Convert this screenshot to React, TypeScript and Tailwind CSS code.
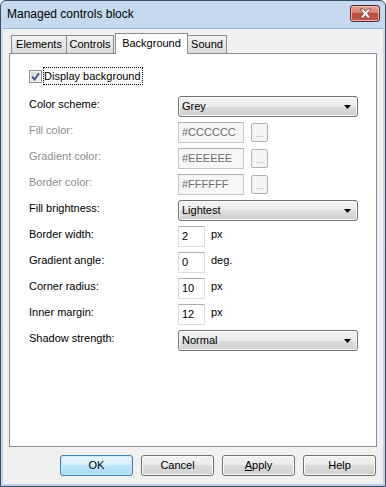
import React from "react";

function Dropdown({ value }: { value: string }) {
  return (
    <div className="w-[180px] h-[21px] border border-[#707070] rounded-[3px] bg-[linear-gradient(to_bottom,#f2f2f2_0%,#ebebeb_50%,#dddddd_50%,#cfcfcf_100%)] flex items-center pl-[3px] pr-[5px] shadow-[inset_0_0_0_1px_#fcfcfc]">
      <span className="flex-1 leading-[13px] text-black">{value}</span>
      <svg width="7" height="4" viewBox="0 0 7 4" className="mr-[1px]">
        <path d="M0 0 H7 L3.5 4 Z" fill="#000" />
      </svg>
    </div>
  );
}

function ColorInput({ value }: { value: string }) {
  return (
    <div className="flex items-start">
      <div className="w-[66px] h-[21px] border border-[#c4c6cb] border-t-[#abadb3] bg-[#f6f6f6] flex items-center pl-[3px] text-[#6d6d6d] leading-[13px]">
        {value}
      </div>
      <div className="ml-[7px] mt-[1px] w-[17px] h-[19px] border border-[#adb2b5] rounded-[2px] bg-[#f4f4f4] flex items-end justify-center pb-[2px] text-[#9a9a9a] text-[9px] leading-[9px]">
        ...
      </div>
    </div>
  );
}

function NumInput({ value, unit }: { value: string; unit: string }) {
  return (
    <div className="flex items-start">
      <div className="w-[27px] h-[21px] border border-[#dadde2] border-t-[#abadb3] bg-white flex items-center pl-[3px] text-black leading-[13px]">
        {value}
      </div>
      <span className="ml-[6px] pt-[2px] leading-[13px] text-black">{unit}</span>
    </div>
  );
}

function Row({
  label,
  disabled,
  children,
}: {
  label: string;
  disabled?: boolean;
  children: React.ReactNode;
}) {
  return (
    <div className="flex h-[21px]">
      <div
        className={
          "w-[149px] pt-[2px] leading-[13px] " +
          (disabled ? "text-[#8d8d8d]" : "text-black")
        }
      >
        {label}
      </div>
      {children}
    </div>
  );
}

function Btn({
  children,
  primary,
}: {
  children: React.ReactNode;
  primary?: boolean;
}) {
  return (
    <div
      className={
        "w-[73px] h-[21px] rounded-[3px] border flex items-center justify-center leading-[13px] text-black " +
        (primary
          ? "border-[#3c7fb1] bg-[linear-gradient(to_bottom,#eaf6fd_0%,#d9f0fc_50%,#bee6fd_50%,#a7d9f5_100%)] shadow-[inset_0_0_0_1px_#c8ecff]"
          : "border-[#707070] bg-[linear-gradient(to_bottom,#f2f2f2_0%,#ebebeb_50%,#dddddd_50%,#cfcfcf_100%)] shadow-[inset_0_0_0_1px_#fcfcfc]")
      }
    >
      {children}
    </div>
  );
}

export default function App() {
  return (
    <div className="w-[386px] h-[487px] bg-white font-['Liberation_Sans',Arial,sans-serif] text-[11px]">
      <div className="h-full flex flex-col border border-[#3a4d66] rounded-t-[6px] bg-[linear-gradient(to_bottom,#c6d9ee,#bcd2ea)] px-[2px] pb-[2px]">
        {/* title bar */}
        <div className="h-[27px] flex items-start pl-[4px] pr-[3px]">
          <span className="mt-[6px] text-[12px] leading-[15px] text-black">
            Managed controls block
          </span>
          <div className="ml-auto mt-[4px] w-[30px] h-[17px] rounded-[3px] border border-[#5b2b2b] bg-[linear-gradient(to_bottom,#e8a89c_0%,#d47c6c_50%,#c24a3a_50%,#c9584a_100%)] shadow-[inset_0_0_0_1px_#e9b6ac] flex items-center justify-center">
            <svg width="13" height="11" viewBox="0 0 13 11">
              <path
                d="M1 1 H4.5 L6.5 3.5 L8.5 1 H12 L8.5 5.5 L12 10 H8.5 L6.5 7.5 L4.5 10 H1 L4.5 5.5 Z"
                fill="#ffffff"
                stroke="#6b3a36"
                strokeWidth="0.8"
              />
            </svg>
          </div>
        </div>

        {/* client */}
        <div className="flex-1 flex flex-col bg-[#f0f0f0] px-[6px] pt-[4px] border-t border-[#9fb4cc]">
          {/* tabs */}
          <div className="relative z-10 flex items-end h-[20px] pl-[2px]">
            <div className="w-[56px] h-[18px] border border-b-0 border-[#898c95] bg-[linear-gradient(to_bottom,#f2f2f2,#dcdcdc)] flex items-center justify-center leading-[13px]">
              Elements
            </div>
            <div className="w-[47px] h-[18px] border border-b-0 border-l-0 border-[#898c95] bg-[linear-gradient(to_bottom,#f2f2f2,#dcdcdc)] flex items-center justify-center leading-[13px]">
              Controls
            </div>
            <div className="ml-[1px] w-[73px] h-[21px] -mb-[1px] border border-b-0 border-[#898c95] bg-white flex items-start justify-center pt-[3px] leading-[13px]">
              Background
            </div>
            <div className="w-[39px] h-[18px] border border-b-0 border-l-0 border-[#898c95] bg-[linear-gradient(to_bottom,#f2f2f2,#dcdcdc)] flex items-center justify-center leading-[13px]">
              Sound
            </div>
          </div>

          {/* panel */}
          <div className="flex-1 border border-[#898c95] bg-white pl-[19px] pt-[13px]">
            <div className="flex items-center h-[18px]">
              <div className="w-[13px] h-[13px] border border-[#8e8f8f] bg-[linear-gradient(to_bottom_right,#d0d0d0,#f6f6f6)] flex items-center justify-center shadow-[inset_0_0_0_1px_#f4f4f4]">
                <svg width="9" height="9" viewBox="0 0 9 9">
                  <path
                    d="M1 4.5 L3.5 7.5 L8 1.2"
                    fill="none"
                    stroke="#3c4f8a"
                    strokeWidth="1.8"
                  />
                </svg>
              </div>
              <span className="ml-[1px] h-[18px] border border-dotted border-black pl-[0px] pr-[1px] flex items-center leading-[13px] text-black">
                Display background
              </span>
            </div>

            <div className="mt-[11px] flex flex-col gap-[5px]">
              <Row label="Color scheme:">
                <Dropdown value="Grey" />
              </Row>
              <Row label="Fill color:" disabled>
                <ColorInput value="#CCCCCC" />
              </Row>
              <Row label="Gradient color:" disabled>
                <ColorInput value="#EEEEEE" />
              </Row>
              <Row label="Border color:" disabled>
                <ColorInput value="#FFFFFF" />
              </Row>
              <Row label="Fill brightness:">
                <Dropdown value="Lightest" />
              </Row>
              <Row label="Border width:">
                <NumInput value="2" unit="px" />
              </Row>
              <Row label="Gradient angle:">
                <NumInput value="0" unit="deg." />
              </Row>
              <Row label="Corner radius:">
                <NumInput value="10" unit="px" />
              </Row>
              <Row label="Inner margin:">
                <NumInput value="12" unit="px" />
              </Row>
              <Row label="Shadow strength:">
                <Dropdown value="Normal" />
              </Row>
            </div>
          </div>

          {/* buttons */}
          <div className="flex justify-end gap-[8px] pt-[8px] pb-[8px] pr-[1px]">
            <Btn primary>OK</Btn>
            <Btn>Cancel</Btn>
            <Btn>
              <span>
                <span className="underline">A</span>pply
              </span>
            </Btn>
            <Btn>Help</Btn>
          </div>
        </div>
      </div>
    </div>
  );
}
